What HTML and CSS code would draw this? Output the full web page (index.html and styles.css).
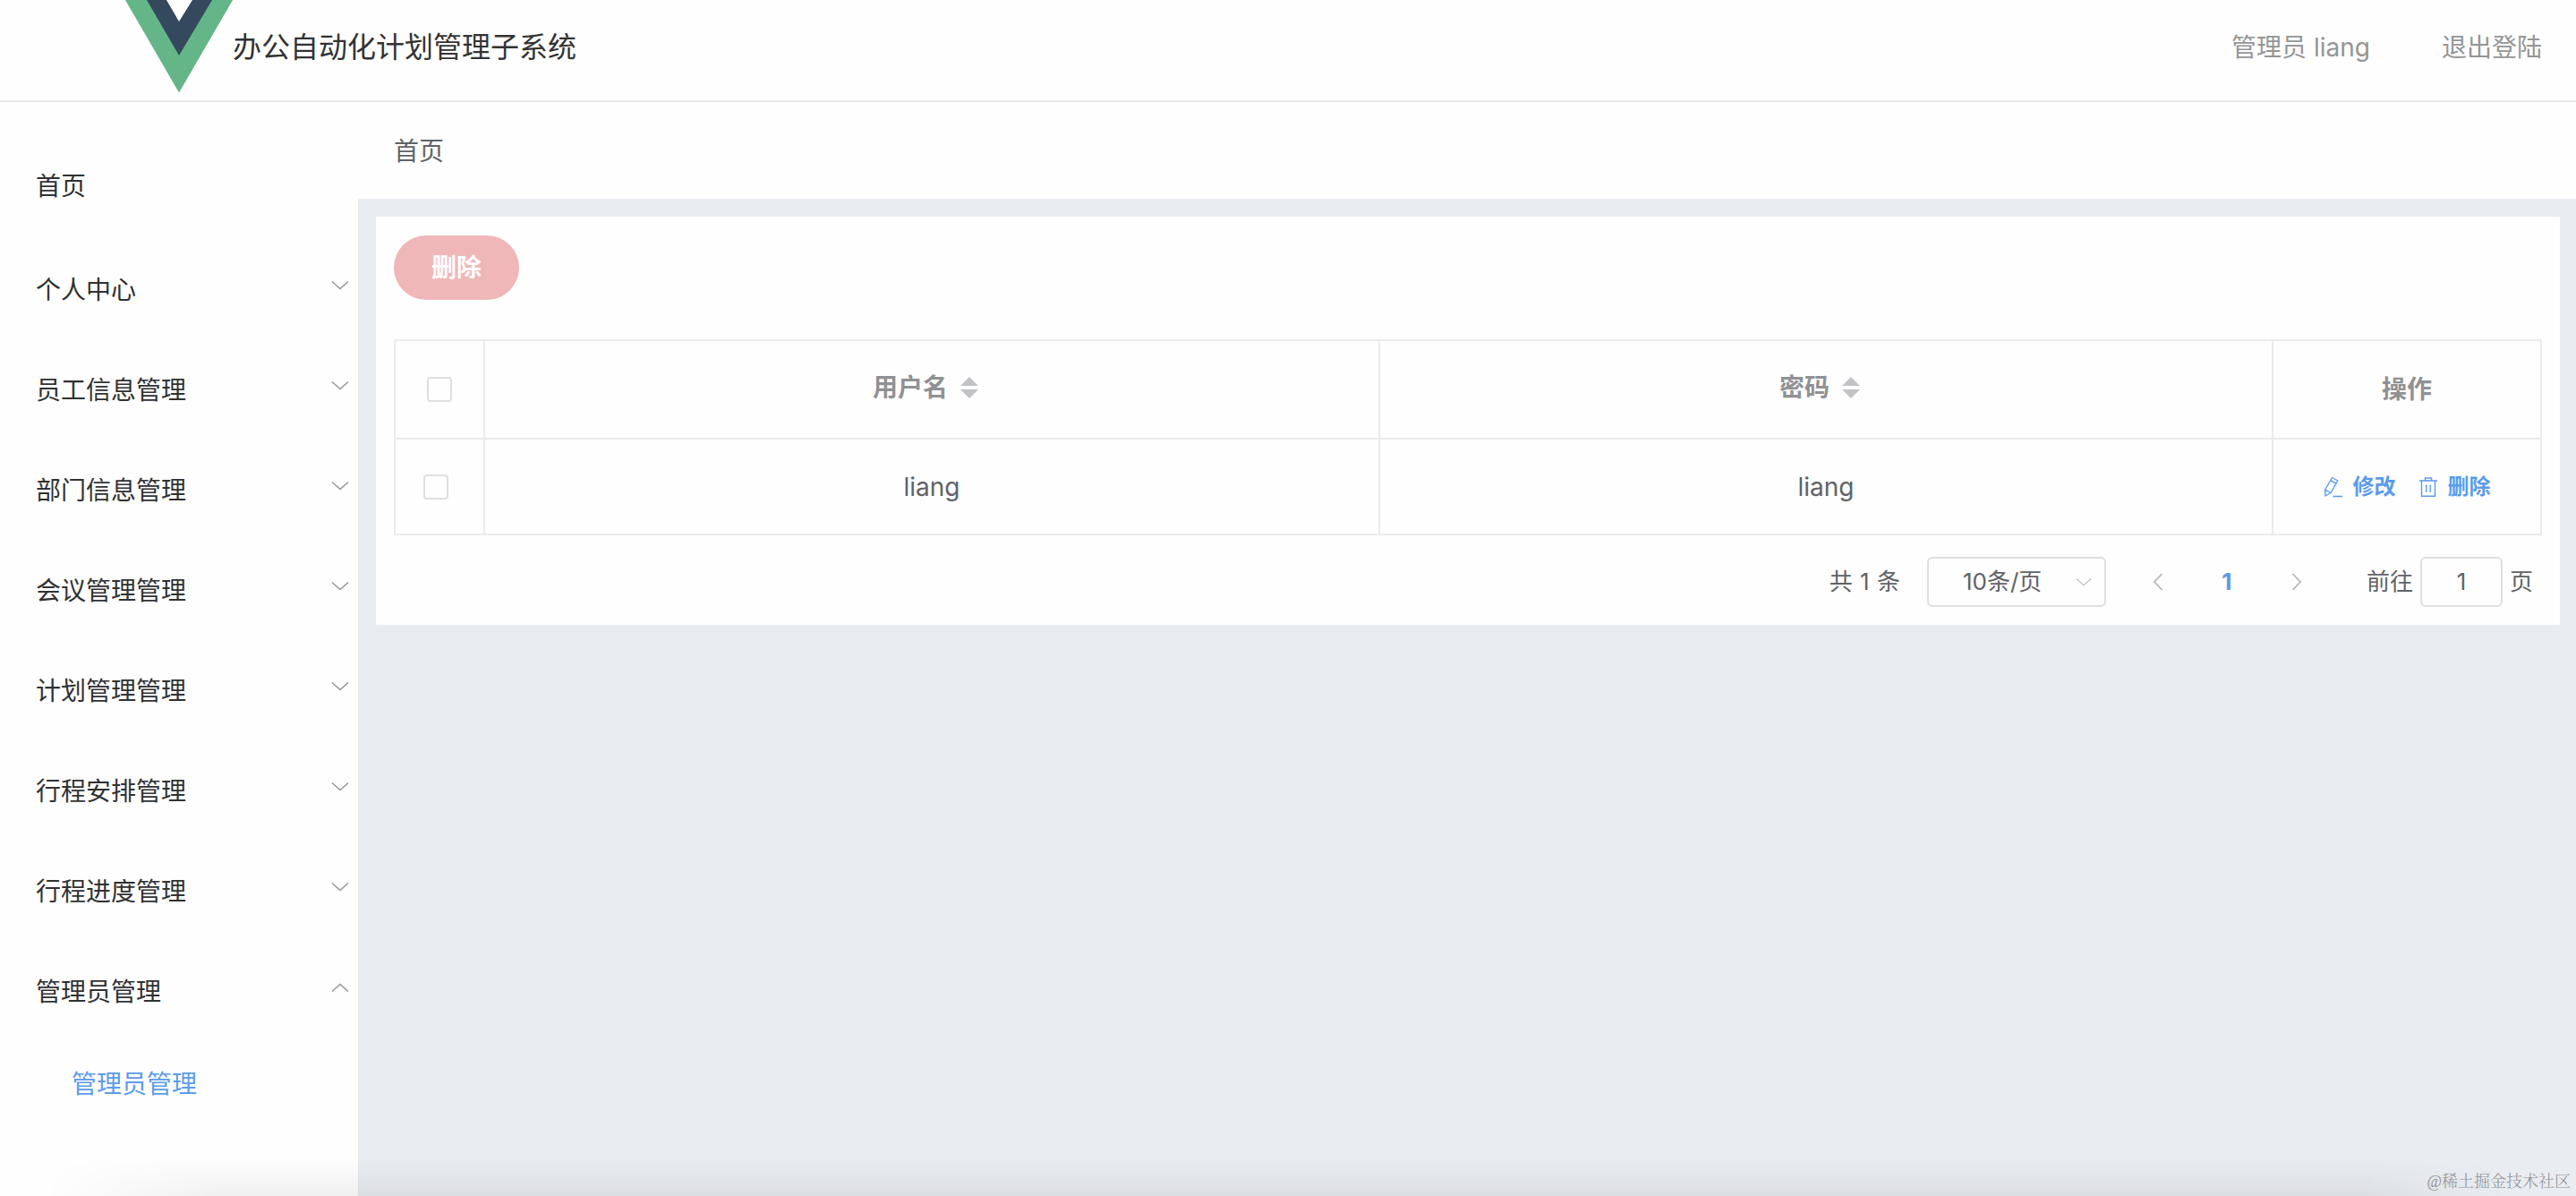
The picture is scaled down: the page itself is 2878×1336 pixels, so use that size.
FILE: index.html
```html
<!DOCTYPE html>
<html lang="zh-CN">
<head>
<meta charset="utf-8">
<title>办公自动化计划管理子系统</title>
<link rel="stylesheet" href="styles.css">
</head>
<body>
<svg class="sprite" width="0" height="0" aria-hidden="true">
  <symbol id="down" viewBox="0 0 20 12"><path d="M1 1.500 10 9.500 19 1.500" fill="none" stroke="currentColor" stroke-width="1.500"/></symbol>
  <symbol id="sort" viewBox="0 0 20 26"><path d="M0 11 10 1l10 10zM0 15h20L10 25z" fill="currentColor"/></symbol>
</svg>
<header class="header">
  <svg class="logo" viewBox="0 0 120 104"><path d="M0 0h120L60 103.500z" fill="#64b587"/><path d="M24 0h73L60 62z" fill="#35495e"/><path d="M46 0h29L60 24z" fill="#fff"/></svg>
  <h1 class="title">办公自动化计划管理子系统</h1>
  <nav class="user"><span>管理员 liang</span><a>退出登陆</a></nav>
</header>
<div class="body">
  <aside class="side">
    <div class="item home">首页</div>
    <div class="item">个人中心<svg><use href="#down"/></svg></div>
    <div class="item">员工信息管理<svg><use href="#down"/></svg></div>
    <div class="item">部门信息管理<svg><use href="#down"/></svg></div>
    <div class="item">会议管理管理<svg><use href="#down"/></svg></div>
    <div class="item">计划管理管理<svg><use href="#down"/></svg></div>
    <div class="item">行程安排管理<svg><use href="#down"/></svg></div>
    <div class="item">行程进度管理<svg><use href="#down"/></svg></div>
    <div class="item open">管理员管理<svg><use href="#down"/></svg></div>
    <div class="sub">管理员管理</div>
  </aside>
  <main class="main">
    <div class="crumb">首页</div>
    <section class="card">
      <button class="delete">删除</button>
      <div class="table">
        <div class="cell head pick"><i class="box"></i></div>
        <div class="cell head sortable">用户名<svg><use href="#sort"/></svg></div>
        <div class="cell head sortable">密码<svg><use href="#sort"/></svg></div>
        <div class="cell head">操作</div>
        <div class="cell pick row"><i class="box"></i></div>
        <div class="cell">liang</div>
        <div class="cell">liang</div>
        <div class="cell ops">
          <a><svg viewBox="0 0 22 24"><path d="M9.500 1.500 15.800 5 8 18.500 2 22l-.3-7zM7.800 4.600l6.200 3.600M1.700 15l6.300 3.500M10.500 22.500H21" fill="none" stroke="currentColor" stroke-width="1.400" stroke-linejoin="round"/></svg>修改</a>
          <a><svg viewBox="0 0 22 24"><path d="M1 5h20M7.500 5V2h7v3M3.500 5v17.300h15V5M8.800 9.500v8.500M13.200 9.500v8.500" fill="none" stroke="currentColor" stroke-width="1.400"/></svg>删除</a>
        </div>
      </div>
      <div class="pager">
        <span class="total">共 1 条</span>
        <div class="select">10条/页<svg><use href="#down"/></svg></div>
        <svg class="arrow" viewBox="0 0 12 20"><path d="M10.500 1 2 10l8.500 9" fill="none" stroke="currentColor" stroke-width="1.800"/></svg>
        <b class="page">1</b>
        <svg class="arrow" viewBox="0 0 12 20"><path d="M1.500 1 10 10l-8.500 9" fill="none" stroke="currentColor" stroke-width="1.800"/></svg>
        <span class="goto">前往</span>
        <div class="input">1</div>
        <span>页</span>
      </div>
    </section>
  </main>
</div>
<div class="shade"></div>
<div class="watermark">@稀土掘金技术社区</div>
</body>
</html>
```
FILE: styles.css
```css
* { box-sizing: border-box; }
body {
  margin: 0;
  height: 1336px;
  position: relative;
  display: flex;
  flex-direction: column;
  overflow: hidden;
  background: #fefefe;
  color: #606266;
  font: 28px/40px Inter, "Noto Sans CJK SC", sans-serif;
}
.sprite { position: absolute; }
.header {
  height: 114px;
  flex: none;
  border-bottom: 2px solid #e7e7e8;
  padding: 0 38px 8px 140px;
  display: flex;
  align-items: center;
}
.logo { width: 120px; height: 104px; }
.title { margin: 0; padding-top: 1px; font-size: 32px; font-weight: 400; color: #333; }
.user { margin-left: auto; padding-top: 1px; display: flex; gap: 80px; color: #949596; }
.body { flex: 1; display: flex; }
.side { width: 400px; flex: none; padding-top: 38px; color: #303133; }
.item {
  height: 112px;
  padding: 0 10px 0 40px;
  display: flex;
  align-items: center;
  justify-content: space-between;
}
.item.home { height: 116px; padding-bottom: 4px; }
.item svg { width: 20px; height: 12px; color: #939598; position: relative; top: -5px; }
.item.open svg { transform: scaleY(-1); }
.sub { padding: 27px 0 0 80px; color: #5b9bea; }
.main { flex: 1; min-width: 0; background: #e9ecf0; }
.crumb { height: 108px; padding: 35px 40px; background: #fefefe; }
.card { margin: 20px 18px 0 20px; height: 456px; padding: 21px 20px 0; background: #fefefe; }
.delete {
  display: block;
  width: 140px;
  height: 72px;
  border: 0;
  border-radius: 36px;
  background: #f0b7b8;
  color: #fff;
  font: inherit;
  font-weight: 700;
}
.table {
  margin-top: 44px;
  height: 219px;
  display: grid;
  grid-template-columns: 100px 1000px 998px 300px;
  grid-template-rows: 110px 107px;
  border: solid #ebebec;
  border-width: 2px 0 0 2px;
}
.cell {
  border: solid #ebebec;
  border-width: 0 2px 2px 0;
  display: flex;
  align-items: center;
  justify-content: center;
}
.head { color: #909194; font-weight: 700; }
.sortable { gap: 14px; padding: 0 14px 5px 0; }
.sortable svg { width: 20px; height: 26px; color: #c0c2c5; }
.pick { justify-content: flex-start; padding-left: 35px; }
.pick.row { padding-left: 31px; }
.box { width: 28px; height: 28px; border: 2px solid #dedfe1; border-radius: 4px; }
.ops { gap: 25px; color: #5b9bea; font-size: 24px; font-weight: 700; }
.ops a { display: flex; align-items: center; gap: 11px; }
.ops svg { width: 22px; height: 24px; }
.pager { margin-top: 24px; height: 56px; display: flex; align-items: center; font-size: 26px; }
.total { margin-left: auto; margin-right: 30px; word-spacing: 1px; }
.select {
  width: 200px;
  height: 56px;
  border: 2px solid #dedfe1;
  border-radius: 6px;
  padding: 0 14px 0 38px;
  display: flex;
  align-items: center;
  justify-content: space-between;
}
.select svg { width: 18px; height: 11px; color: #c0c2c5; }
.arrow { width: 12px; height: 20px; color: #b6b7b9; margin-left: 52px; }
.page { width: 20px; margin-left: 61px; text-align: center; color: #5b9bea; }
.page + .arrow { margin-left: 62px; }
.goto { margin-left: 72px; }
.input {
  width: 92px;
  height: 56px;
  margin: 0 8px;
  border: 2px solid #dedfe1;
  border-radius: 6px;
  display: flex;
  align-items: center;
  justify-content: center;
}
.pager > span:last-child { margin-right: 10px; }
.shade {
  position: absolute;
  left: 0;
  right: 0;
  bottom: 0;
  height: 44px;
  background: linear-gradient(transparent, rgba(0, 0, 0, .055));
  -webkit-mask-image: linear-gradient(90deg, transparent 50px, #000 250px, #000 2640px, transparent 2800px);
  mask-image: linear-gradient(90deg, transparent 50px, #000 250px, #000 2640px, transparent 2800px);
}
.watermark {
  position: absolute;
  right: 6px;
  bottom: 3px;
  font: 300 18px/26px "Liberation Serif", "Noto Serif CJK SC", "Noto Sans CJK SC", serif;
  color: #909294;
}
```
